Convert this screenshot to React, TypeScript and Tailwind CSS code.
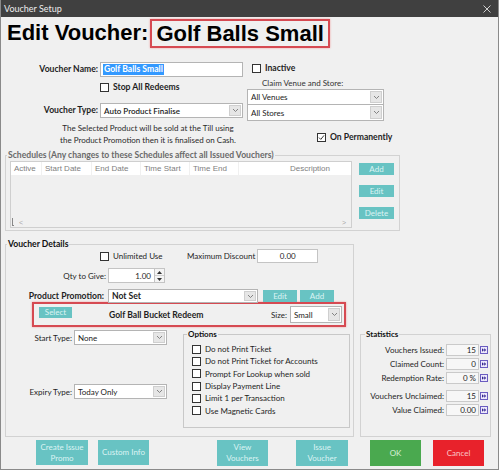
import React from 'react';

const TEAL = 'bg-[#68c3c3] text-[#dcf3f3]';
const B = 'font-bold text-[8.6px]';

function Check({ checked = false }: { checked?: boolean }) {
  return (
    <span className="w-[9px] h-[9px] shrink-0 border border-[#333] bg-white flex items-center justify-center">
      {checked && (
        <svg width="7" height="7" viewBox="0 0 7 7">
          <path d="M1 3.6 L2.8 5.4 L6 1.4" fill="none" stroke="#222" strokeWidth="0.9" />
        </svg>
      )}
    </span>
  );
}

function Chevron() {
  return (
    <svg width="7" height="5" viewBox="0 0 7 5">
      <path d="M1 1 L3.5 3.5 L6 1" fill="none" stroke="#777" strokeWidth="0.9" />
    </svg>
  );
}

function Combo({ value, className = '', bold = false, semi = false }: { value: string; className?: string; bold?: boolean; semi?: boolean }) {
  return (
    <div className={`flex border border-[#b4b4b4] bg-white ${className}`}>
      <span className={`flex-1 flex items-center pl-[3px] text-[#222] ${bold ? B : ''} ${semi ? 'font-semibold' : ''}`}>{value}</span>
      <span className="w-[12px] my-[1px] mr-[1px] bg-[#e6e6e6] border border-[#cfcfcf] flex items-center justify-center">
        <Chevron />
      </span>
    </div>
  );
}

function TealBtn({ label, className = '' }: { label: React.ReactNode; className?: string }) {
  return <div className={`${TEAL} flex items-center justify-center text-center leading-[11px] ${className}`}>{label}</div>;
}

function StatIcon() {
  return (
    <svg width="8" height="8" viewBox="0 0 8 8" className="ml-[1px] shrink-0">
      <rect x="0.5" y="0.5" width="7" height="7" fill="#ece8fb" stroke="#6a5cc0" strokeWidth="1" />
      <path d="M2 2.2 L4 4 L2 5.8 Z M4.2 2.2 L6.2 4 L4.2 5.8 Z" fill="#34288f" />
    </svg>
  );
}

const OPTIONS = [
  'Do not Print Ticket',
  'Do not Print Ticket for Accounts',
  'Prompt For Lookup when sold',
  'Display Payment Line',
  'Limit 1 per Transaction',
  'Use Magnetic Cards',
];

const STATS = [
  { label: 'Vouchers Issued:', value: '15', mt: 'mt-[5px]' },
  { label: 'Claimed Count:', value: '0', mt: 'mt-[2px]' },
  { label: 'Redemption Rate:', value: '0 %', mt: 'mt-[2px]' },
  { label: 'Vouchers Unclaimed:', value: '15', mt: 'mt-[6px]' },
  { label: 'Value Claimed:', value: '0.00', mt: 'mt-[2px]' },
];

const COLUMNS = [
  { name: 'Active', w: 'w-[31px]' },
  { name: 'Start Date', w: 'w-[50px]' },
  { name: 'End Date', w: 'w-[49px]' },
  { name: 'Time Start', w: 'w-[49px]' },
  { name: 'Time End', w: 'w-[49px]' },
];

export default function App() {
  return (
    <div className="w-[499px] h-[470px] bg-[#f0f0f0] border-x border-b border-[#8a8a8a] flex flex-col overflow-hidden text-[8px] leading-none text-[#1e1e1e] [font-family:Lato,'Open_Sans',sans-serif]">
      {/* Title bar */}
      <div className="h-[17px] shrink-0 bg-[#404040] flex items-center justify-between pl-[3px] pr-[7px] text-[9px] text-[#ececec]">
        <span>Voucher Setup</span>
        <svg width="8" height="8" viewBox="0 0 8 8">
          <path d="M0.5 0.5 L7.5 7.5 M7.5 0.5 L0.5 7.5" stroke="#e0e0e0" strokeWidth="0.9" />
        </svg>
      </div>

      {/* Heading */}
      <div className="h-[31px] shrink-0 flex items-center pl-[6px] text-[22px] font-bold text-black [font-family:'Liberation_Sans',Arial,sans-serif]">
        <span>Edit Voucher:</span>
        <span className="ml-[2px] h-[29px] mt-[2px] flex items-center px-[4px] border-2 border-[#d64a52] shadow-[0_0_2px_#f0a0a0]">
          Golf Balls Small
        </span>
      </div>

      {/* Top form */}
      <div className="h-[102px] shrink-0 flex">
        <div className="w-[244px] flex flex-col">
          <div className="mt-[14px] h-[15px] flex items-center">
            <span className={`w-[97px] text-right ${B}`}>Voucher Name:</span>
            <div className="ml-[2px] w-[143px] h-[15px] border border-[#b4b4b4] bg-white flex items-center pl-[2px]">
              <span className={`bg-[#3399ff] text-white px-[1px] py-[1px] ${B}`}>Golf Balls Small</span>
            </div>
          </div>
          <div className="mt-[5px] h-[10px] flex items-center pl-[99px]">
            <Check />
            <span className={`ml-[4px] ${B}`}>Stop All Redeems</span>
          </div>
          <div className="mt-[11px] h-[15px] flex items-center">
            <span className={`w-[97px] text-right ${B}`}>Voucher Type:</span>
            <Combo value="Auto Product Finalise" semi className="ml-[2px] w-[143px] h-[15px]" />
          </div>
          <div className="mt-[4px] ml-[52px] w-[190px] text-center leading-[12px] text-[#2a2a2a]">
            The Selected Product will be sold at the Till using
            <br />
            the Product Promotion then it is finalised on Cash.
          </div>
        </div>

        <div className="flex flex-col">
          <div className="mt-[16px] h-[9px] flex items-center pl-[7px]">
            <Check />
            <span className={`ml-[4px] ${B}`}>Inactive</span>
          </div>
          <div className="mt-[6px] h-[9px] pl-[17px] text-[#333]">Claim Venue and Store:</div>
          <Combo value="All Venues" className="mt-[1px] ml-[2px] w-[137px] h-[16px]" />
          <Combo value="All Stores" className="ml-[2px] w-[137px] h-[16px] border-t-0" />
          <div className="mt-[12px] h-[9px] flex items-center pl-[72px]">
            <Check checked />
            <span className={`ml-[4px] ${B}`}>On Permanently</span>
          </div>
        </div>
      </div>

      {/* Schedules */}
      <fieldset className="ml-[4px] w-[395px] h-[81px] shrink-0 border border-[#d2d2d2]">
        <legend className={`ml-[1px] px-[1px] text-[#6a6a6a] leading-[10px] ${B}`}>
          Schedules (Any changes to these Schedules affect all Issued Vouchers)
        </legend>
        <div className="flex">
          <div className="mt-[1px] ml-[4px] w-[342px] h-[67px] border border-[#cfcfcf] bg-[#f0f0f0] flex flex-col [font-family:'Liberation_Sans',Arial,sans-serif] text-[#808080]">
            <div className="h-[13px] bg-white flex items-center">
              {COLUMNS.map((c) => (
                <span key={c.name} className={`${c.w} h-full flex items-center pl-[3px] border-r border-[#f0f0f0]`}>
                  {c.name}
                </span>
              ))}
              <span className="flex-1 text-center pl-[30px]">Description</span>
            </div>
            <div className="flex-1" />
            <div className="h-[10px] flex items-center justify-between pl-[1px] pr-[5px] text-[#aaa] text-[7px]">
              <span className="flex items-center gap-[5px]">
                <span className="w-[2px] h-[8px] border-l border-b border-[#888]" />
                <span>&lt;</span>
              </span>
              <span>&gt;</span>
            </div>
          </div>
          <div className="ml-[7px] mt-[3px] flex flex-col gap-[10px]">
            <TealBtn label="Add" className="w-[35px] h-[12px]" />
            <TealBtn label="Edit" className="w-[35px] h-[12px]" />
            <TealBtn label="Delete" className="w-[35px] h-[12px]" />
          </div>
        </div>
      </fieldset>

      {/* Voucher details + statistics */}
      <div className="mt-[9px] flex items-end shrink-0">
        <fieldset className="ml-[4px] w-[349px] h-[197px] border border-[#d2d2d2]">
          <legend className={`ml-[1px] px-[1px] text-[#111] leading-[9px] ${B}`}>Voucher Details</legend>

          <div className="h-[14px] flex items-center">
            <div className="w-[181px] pl-[94px] flex items-center">
              <Check />
              <span className="ml-[4px]">Unlimited Use</span>
            </div>
            <span>Maximum Discount</span>
            <div className="ml-[2px] w-[61px] h-[14px] border border-[#c4c4c4] bg-white flex items-center justify-center">0.00</div>
          </div>

          <div className="mt-[5px] h-[15px] flex items-center">
            <span className="w-[100px] text-right">Qty to Give:</span>
            <div className="ml-[2px] w-[47px] h-[15px] border border-[#c4c4c4] bg-white flex items-center justify-end pr-[3px]">1.00</div>
            <div className="w-[10px] h-[15px] flex flex-col border border-l-0 border-[#c4c4c4] bg-[#f4f4f4]">
              <span className="flex-1 flex items-center justify-center border-b border-[#d0d0d0]">
                <svg width="5" height="3" viewBox="0 0 5 3"><path d="M0 3 L2.5 0 L5 3 Z" fill="#333" /></svg>
              </span>
              <span className="flex-1 flex items-center justify-center">
                <svg width="5" height="3" viewBox="0 0 5 3"><path d="M0 0 L2.5 3 L5 0 Z" fill="#333" /></svg>
              </span>
            </div>
          </div>

          <div className="mt-[6px] h-[14px] flex items-center">
            <span className={`w-[98px] text-right ${B}`}>Product Promotion:</span>
            <Combo value="Not Set" bold className="ml-[4px] w-[150px] h-[14px]" />
            <TealBtn label="Edit" className="ml-[5px] w-[34px] h-[12px]" />
            <TealBtn label="Add" className="ml-[3px] w-[34px] h-[12px]" />
          </div>

          <div className="-mt-[1px] ml-[26px] w-[314px] h-[25px] border-2 border-[#d64a52] shadow-[0_0_2px_#f0a0a0] flex items-center">
            <TealBtn label="Select" className="self-start mt-[3px] ml-[5px] w-[33px] h-[11px]" />
            <span className={`ml-[37px] mt-[2px] ${B}`}>Golf Ball Bucket Redeem</span>
            <span className="ml-auto">Size:</span>
            <Combo value="Small" className="ml-[3px] mr-[2px] w-[52px] h-[17px]" />
          </div>

          <div className="flex">
            <div className="w-[170px] flex flex-col">
              <div className="mt-[3px] h-[15px] flex items-center">
                <span className="w-[66px] text-right">Start Type:</span>
                <Combo value="None" className="ml-[2px] w-[93px] h-[15px]" />
              </div>
              <div className="mt-[39px] h-[15px] flex items-center">
                <span className="w-[66px] text-right">Expiry Type:</span>
                <Combo value="Today Only" className="ml-[2px] w-[93px] h-[15px]" />
              </div>
            </div>
            <fieldset className="mt-[2px] ml-[7px] w-[167px] h-[99px] border border-[#c8c8c8]">
              <legend className="ml-[3px] px-[1px] font-bold text-[#111] leading-[10px]">Options</legend>
              <div className="mt-[4px] pl-[8px] flex flex-col">
                {OPTIONS.map((o) => (
                  <div key={o} className="h-[12.3px] flex items-center">
                    <Check />
                    <span className="ml-[4px]">{o}</span>
                  </div>
                ))}
              </div>
            </fieldset>
          </div>
        </fieldset>

        <fieldset className="ml-[6px] w-[131px] h-[108px] border border-[#d2d2d2]">
          <legend className="ml-[4px] px-[1px] font-bold text-[#111] leading-[10px]">Statistics</legend>
          {STATS.map((s) => (
            <div key={s.label} className={`${s.mt} h-[12px] flex items-center`}>
              <span className="w-[83px] text-right">{s.label}</span>
              <span className="ml-[2px] w-[33px] h-[12px] border border-[#cacaca] bg-[#f7f7f7] flex items-center justify-end pr-[2px]">
                {s.value}
              </span>
              <StatIcon />
            </div>
          ))}
        </fieldset>
      </div>

      {/* Bottom buttons */}
      <div className="mt-[3px] h-[26px] shrink-0 flex">
        <TealBtn label={<>Create Issue<br />Promo</>} className="ml-[35px] w-[52px] h-[25px]" />
        <TealBtn label="Custom Info" className="ml-[10px] w-[51px] h-[25px]" />
        <TealBtn label={<>View<br />Vouchers</>} className="ml-[68px] w-[51px] h-[26px]" />
        <TealBtn label={<>Issue<br />Voucher</>} className="ml-[28px] w-[52px] h-[26px]" />
        <div className="ml-[22px] w-[51px] h-[26px] bg-[#4aa94f] text-[#d6efd6] flex items-center justify-center">OK</div>
        <div className="ml-[12px] w-[51px] h-[26px] bg-[#e8222b] text-[#fbc8c8] flex items-center justify-center">Cancel</div>
      </div>
    </div>
  );
}
